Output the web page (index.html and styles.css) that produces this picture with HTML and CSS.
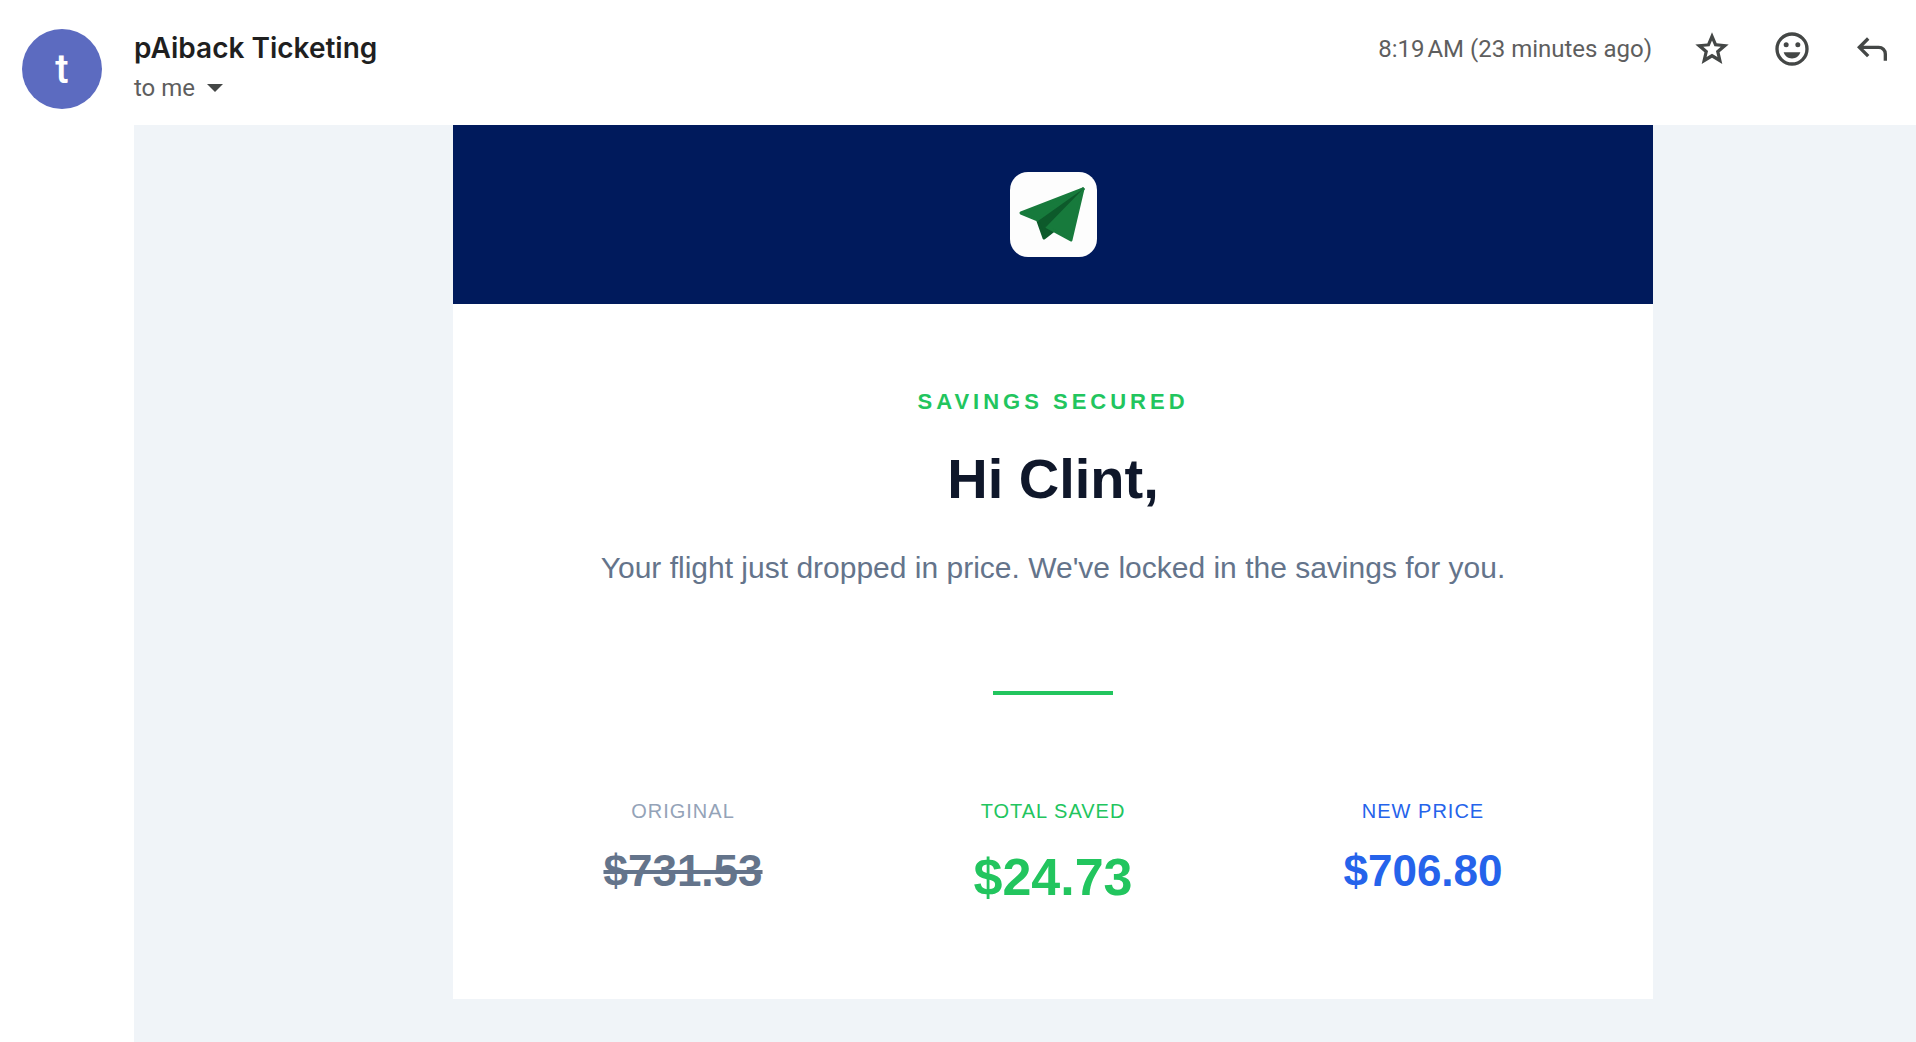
FILE: index.html
```
<!DOCTYPE html>
<html lang="en">
<head>
    <meta charset="UTF-8">
    <meta name="viewport" content="width=device-width, initial-scale=1.0">
    <title>pAiback Ticketing</title>
    <link rel="stylesheet" href="styles.css">
</head>
<body>
    <header class="message-header">
        <div class="avatar">t</div>
        <div class="sender">
            <h2 class="sender-name">pAiback Ticketing</h2>
            <button class="recipient" type="button">
                to me
                <svg class="caret" viewBox="0 0 16 8" aria-hidden="true"><path d="M0 0h16L8 8z"/></svg>
            </button>
        </div>
        <div class="message-meta">
            <span class="time">8:19&#8239;AM (23 minutes ago)</span>
            <div class="actions">
                <button class="icon-button" type="button" aria-label="Star">
                    <svg viewBox="0 0 24 24"><path d="M22 9.24l-7.19-.62L12 2 9.19 8.63 2 9.24l5.46 4.73L5.82 21 12 17.27 18.18 21l-1.63-7.03L22 9.24zM12 14.900l-3.250 1.960.860-3.700-2.860-2.480 3.780-.330L12 6.870l1.470 3.480 3.780.330-2.860 2.480.860 3.700L12 14.900z"/></svg>
                </button>
                <button class="icon-button" type="button" aria-label="Add reaction">
                    <svg viewBox="0 0 24 24"><path d="M12 2a10 10 0 1 0 0 20 10 10 0 0 0 0-20zm0 18a8 8 0 1 1 0-16 8 8 0 0 1 0 16z"/><circle cx="8.500" cy="9.500" r="1.500"/><circle cx="15.500" cy="9.500" r="1.500"/><path d="M7 14h10c-.6 2.200-2.500 3.700-5 3.700S7.600 16.200 7 14z"/></svg>
                </button>
                <button class="icon-button" type="button" aria-label="Reply">
                    <svg viewBox="0 0 24 24"><path d="M19 19v-4a3 3 0 0 0-3-3H6.830l3.600 3.600L9 17l-6-6 6-6 1.430 1.400L6.830 10H16a5 5 0 0 1 5 5v4z"/></svg>
                </button>
            </div>
        </div>
    </header>

    <main class="message-body">
        <div class="card">
            <div class="brand">
                <svg class="logo" viewBox="0 0 87 85" role="img" aria-label="pAiback">
                    <rect width="87" height="85" rx="18" fill="#fdfdfd"/>
                    <g stroke-width="3" stroke-linejoin="round">
                        <path d="M28 49L73 17 37 56 43 59 34 66z" fill="#0d5a2b" stroke="#0d5a2b"/>
                        <path d="M73 17L11 41 28 48z" fill="#177a3c" stroke="#177a3c"/>
                        <path d="M73 17L37 55 61 68z" fill="#177a3c" stroke="#177a3c"/>
                    </g>
                    <path d="M28 49L73 17 36 55z" fill="#0d5a2b"/>
                </svg>
            </div>
            <div class="intro">
                <p class="eyebrow">SAVINGS SECURED</p>
                <h1>Hi Clint,</h1>
                <p class="lead">Your flight just dropped in price. We've locked in the savings for you.</p>
            </div>
            <div class="divider"></div>
            <div class="prices">
                <div class="price original">
                    <p class="label">ORIGINAL</p>
                    <p class="amount"><s>$731.53</s></p>
                </div>
                <div class="price saved">
                    <p class="label">TOTAL SAVED</p>
                    <p class="amount">$24.73</p>
                </div>
                <div class="price new">
                    <p class="label">NEW PRICE</p>
                    <p class="amount">$706.80</p>
                </div>
            </div>
        </div>
    </main>
</body>
</html>
```
FILE: styles.css
```
* {
    box-sizing: border-box;
}
body {
    display: flex;
    flex-direction: column;
    min-height: 100vh;
    margin: 0;
    background: #fff;
    font-family: "Liberation Sans", Arial, sans-serif;
}
h1, h2, p {
    margin: 0;
}
button {
    padding: 0;
    border: none;
    background: none;
    font: inherit;
    color: inherit;
    cursor: pointer;
}

/* Message header */
.message-header {
    display: flex;
    align-items: flex-start;
    padding: 29px 24px 16px 22px;
    font-family: Roboto, sans-serif;
    color: #5e5e5e;
}
.avatar {
    display: flex;
    align-items: center;
    justify-content: center;
    width: 80px;
    height: 80px;
    margin-right: 32px;
    border-radius: 50%;
    background: #5c6bc0;
    color: #fff;
    font-size: 40px;
    font-weight: 500;
}
.sender-name {
    font-family: Inter, sans-serif;
    font-size: 28px;
    font-weight: 600;
    line-height: 38px;
    color: #1f1f1f;
}
.recipient {
    display: flex;
    align-items: center;
    gap: 12px;
    font-size: 24px;
    line-height: 42px;
}
.caret {
    width: 16px;
    height: 8px;
    fill: #444746;
}
.message-meta {
    display: flex;
    align-items: center;
    gap: 40px;
    height: 40px;
    margin-left: auto;
}
.time {
    font-size: 24px;
}
.actions {
    display: flex;
    gap: 40px;
}
.icon-button {
    width: 40px;
    height: 40px;
}
.icon-button svg {
    display: block;
    fill: #444746;
}

/* Message body */
.message-body {
    flex: 1;
    margin-left: 134px;
    padding: 0 0 44px 56px;
    background: #f0f4f8;
}
.card {
    max-width: 1200px;
    margin: 0 auto;
    padding-bottom: 88px;
    background: #fff;
    text-align: center;
}
.brand {
    display: flex;
    justify-content: center;
    padding: 47px;
    background: #001a5c;
}
.logo {
    width: 87px;
    height: 85px;
}
.intro {
    padding: 82px 40px 98px;
}
.eyebrow {
    margin-bottom: 29px;
    font-size: 22px;
    font-weight: bold;
    line-height: 32px;
    letter-spacing: 4px;
    color: #22c55e;
}
h1 {
    margin-bottom: 32px;
    font-size: 56px;
    line-height: 64px;
    color: #0f172a;
}
.lead {
    font-size: 30px;
    line-height: 50px;
    color: #64748b;
}
.divider {
    width: 120px;
    height: 4px;
    margin: 0 auto;
    background: #22c55e;
}
.prices {
    display: flex;
    padding: 100px 45px 0;
}
.price {
    flex: 1;
}
.label {
    margin-bottom: 16px;
    font-size: 20px;
    line-height: 32px;
    letter-spacing: 1px;
}
.amount {
    font-size: 44px;
    font-weight: bold;
    line-height: 56px;
}
.original .label {
    color: #94a3b8;
}
.original .amount {
    color: #64748b;
}
.saved {
    color: #22c55e;
}
.saved .amount {
    font-size: 52px;
    line-height: 68px;
}
.new {
    color: #2563eb;
}
```
